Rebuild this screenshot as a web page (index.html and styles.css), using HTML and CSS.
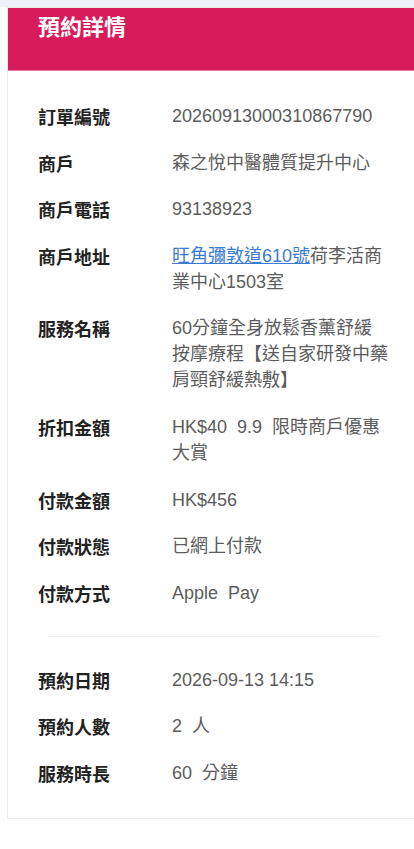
FILE: index.html
```html
<!DOCTYPE html>
<html lang="zh-Hant">
<head>
<meta charset="utf-8">
<meta name="viewport" content="width=device-width, initial-scale=1">
<title>預約詳情</title>
<link rel="stylesheet" href="styles.css">
</head>
<body>
<div class="topbar"></div>
<div class="card">
  <div class="card-header">
    <h1 class="title">預約詳情</h1>
  </div>
  <div class="section">
    <div class="row"><div class="label">訂單編號</div><div class="value">20260913000310867790</div></div>
    <div class="row"><div class="label">商戶</div><div class="value">森之悅中醫體質提升中心</div></div>
    <div class="row"><div class="label">商戶電話</div><div class="value">93138923</div></div>
    <div class="row"><div class="label">商戶地址</div><div class="value"><a class="link" href="#">旺角彌敦道610號</a>荷李活商業中心1503室</div></div>
    <div class="row"><div class="label">服務名稱</div><div class="value">60分鐘全身放鬆香薰舒緩按摩療程【送自家研發中藥肩頸舒緩熱敷】</div></div>
    <div class="row"><div class="label">折扣金額</div><div class="value">HK$40&nbsp; 9.9&nbsp; 限時商戶優惠大賞</div></div>
    <div class="row"><div class="label">付款金額</div><div class="value">HK$456</div></div>
    <div class="row"><div class="label">付款狀態</div><div class="value">已網上付款</div></div>
    <div class="row"><div class="label">付款方式</div><div class="value">Apple&nbsp; Pay</div></div>
  </div>
  <div class="divider"></div>
  <div class="section section-last">
    <div class="row"><div class="label">預約日期</div><div class="value">2026-09-13 14:15</div></div>
    <div class="row"><div class="label">預約人數</div><div class="value">2&nbsp; 人</div></div>
    <div class="row"><div class="label">服務時長</div><div class="value">60&nbsp; 分鐘</div></div>
  </div>
</div>
</body>
</html>
```

FILE: styles.css
```css
html, body {
  margin: 0;
  padding: 0;
  background: #ffffff;
}

body {
  font-family: "Liberation Sans", "Noto Sans CJK TC", sans-serif;
  width: 414px;
  overflow: hidden;
}

.topbar {
  height: 7px;
  background: #eef2fa;
}

.card {
  margin-left: 7px;
  border: 1px solid #ececec;
  border-right: none;
  background: #ffffff;
}

.card-header {
  background: #d81b5a;
  height: 63px;
  border-bottom: 1px solid #e9799f;
  padding: 1px 0 0 30px;
  box-sizing: border-box;
}

.title {
  margin: 0;
  color: #ffffff;
  font-family: "Noto Sans CJK TC", sans-serif;
  font-size: 22px;
  font-weight: 700;
  line-height: 32px;
}

.section {
  display: flex;
  flex-direction: column;
  gap: 20.6px;
  padding: 32px 0 30px 30px;
}

.section-last {
  padding-top: 30px;
  padding-bottom: 32px;
}

.row {
  display: flex;
  align-items: flex-start;
}

.label {
  width: 134px;
  flex: none;
  font-family: "Noto Sans CJK TC", sans-serif;
  font-size: 18px;
  font-weight: 700;
  line-height: 26px;
  color: #222222;
}

.value {
  width: 217px;
  font-size: 18px;
  line-height: 26px;
  color: #5c5c5c;
  word-break: break-all;
}

.link {
  color: #3a7bd5;
  text-decoration: underline;
}

.divider {
  height: 1px;
  background: #eeeeee;
  margin: 0 33px 0 40px;
}
```
